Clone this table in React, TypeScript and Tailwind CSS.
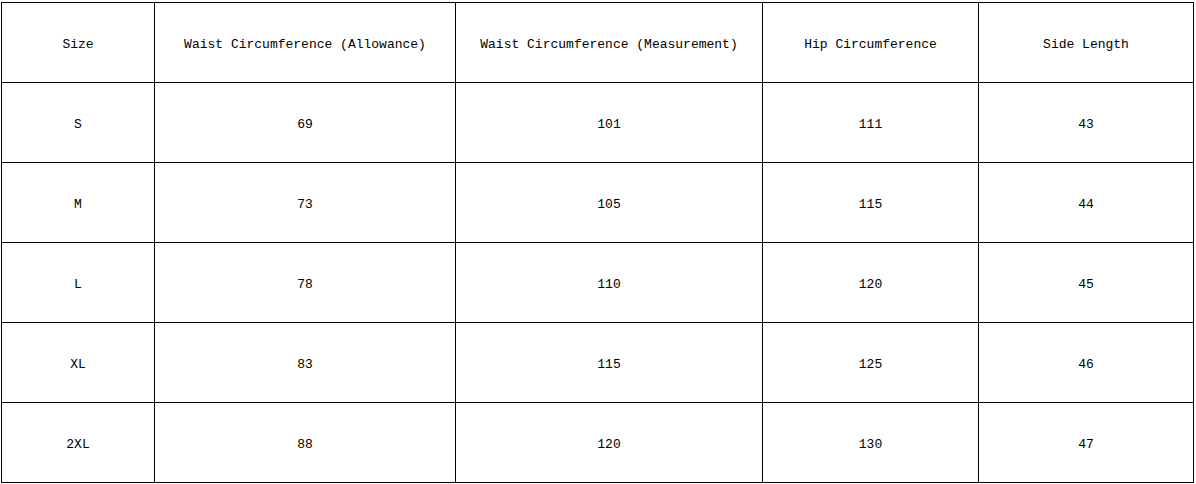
import React from "react";

const headers = [
  "Size",
  "Waist Circumference (Allowance)",
  "Waist Circumference (Measurement)",
  "Hip Circumference",
  "Side Length",
];

const rows = [
  ["S", "69", "101", "111", "43"],
  ["M", "73", "105", "115", "44"],
  ["L", "78", "110", "120", "45"],
  ["XL", "83", "115", "125", "46"],
  ["2XL", "88", "120", "130", "47"],
];

export default function App() {
  const all = [headers, ...rows];
  return (
    <div className="w-[1196px] h-[484px] bg-white pt-[2px] pl-[1px]">
      <div
        className="grid w-fit bg-black p-px gap-px grid-cols-[152px_300px_306px_215px_214px] auto-rows-[79px] text-[13px] text-black"
        style={{ fontFamily: '"Liberation Mono", "DejaVu Sans Mono", monospace' }}
      >
        {all.map((r, i) =>
          r.map((c, j) => (
            <div key={`${i}-${j}`} className="bg-white flex items-center justify-center whitespace-nowrap pt-[4px]">
              {c}
            </div>
          ))
        )}
      </div>
    </div>
  );
}
